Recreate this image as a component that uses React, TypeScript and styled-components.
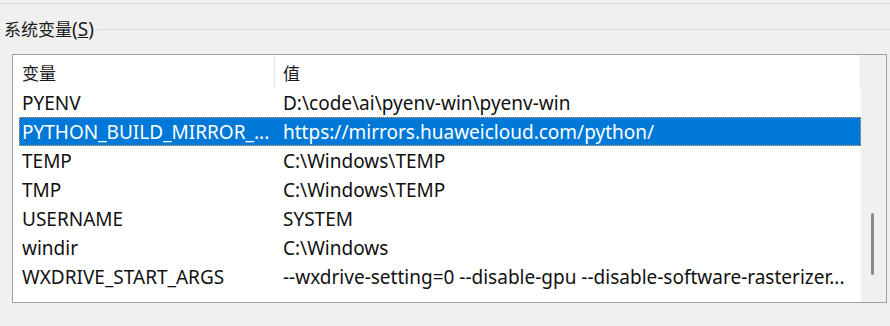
import React from "react";
import styled, { createGlobalStyle } from "styled-components";

const GlobalStyle = createGlobalStyle`
  html, body {
    margin: 0;
    padding: 0;
    background: #f0f0f0;
  }
  body {
    font-family: "Noto Sans", "Noto Sans CJK SC", sans-serif;
    font-size: 19px;
    color: #000;
  }
`;

const Page = styled.div`
  width: 890px;
  height: 326px;
  padding-top: 3px;
  box-sizing: border-box;
  overflow: hidden;
`;

const TopRule = styled.div`
  height: 1px;
  background: #dadada;
`;

const GroupHeader = styled.div`
  display: flex;
  align-items: center;
  height: 26px;
  margin-top: 12px;
`;

const Rule = styled.div<{ $grow?: boolean }>`
  height: 1px;
  background: #dadada;
  width: ${(p) => (p.$grow ? "auto" : "3px")};
  flex: ${(p) => (p.$grow ? 1 : "none")};
`;

const Legend = styled.span`
  padding: 0 3px 0 1px;
  color: #1a1a1a;
  line-height: 26px;
`;

const Cjk = styled.span`
  font-family: "Noto Sans CJK SC", sans-serif;
  font-size: 17px;
`;

const ListBox = styled.div`
  margin: 12px 0 0 12px;
  width: 875px;
  height: 249px;
  box-sizing: border-box;
  border: 1px solid #a0a0a0;
  background: #fff;
  display: flex;
`;

const Content = styled.div`
  flex: 1;
  display: flex;
  flex-direction: column;
  min-width: 0;
`;

const HeaderRow = styled.div`
  display: flex;
  height: 33px;
  flex: none;
`;

const HeaderCell = styled.div<{ $width?: number }>`
  box-sizing: border-box;
  width: ${(p) => (p.$width ? `${p.$width}px` : "auto")};
  flex: ${(p) => (p.$width ? "none" : 1)};
  padding-left: ${(p) => (p.$width ? 9 : 8)}px;
  display: flex;
  align-items: center;
  margin-top: 1px;
  border-right: 1px solid #e5e5e5;
  color: #1a1a1a;
`;

const Row = styled.div<{ $selected?: boolean }>`
  display: flex;
  align-items: center;
  height: 29px;
  margin-left: 6px;
  box-sizing: border-box;
  background: ${(p) => (p.$selected ? "#0078d7" : "transparent")};
  color: ${(p) => (p.$selected ? "#fff" : "#111")};
  outline: ${(p) => (p.$selected ? "1px dotted #e0a060" : "none")};
  outline-offset: -1px;
  white-space: nowrap;
`;

const NameCell = styled.div`
  width: 261px;
  flex: none;
  padding-left: 3px;
  box-sizing: border-box;
  overflow: hidden;
`;

const ValueCell = styled.div`
  flex: 1;
  padding-left: 3px;
  overflow: hidden;
`;

const ScrollTrack = styled.div`
  width: 25px;
  flex: none;
  background: #f0f0f0;
  position: relative;
`;

const Thumb = styled.div`
  position: absolute;
  left: 10px;
  top: 158px;
  width: 3px;
  height: 62px;
  border-radius: 2px;
  background: #8a8a8a;
`;

const vars: [string, string][] = [
  ["PYENV", "D:\\code\\ai\\pyenv-win\\pyenv-win"],
  ["PYTHON_BUILD_MIRROR_...", "https://mirrors.huaweicloud.com/python/"],
  ["TEMP", "C:\\Windows\\TEMP"],
  ["TMP", "C:\\Windows\\TEMP"],
  ["USERNAME", "SYSTEM"],
  ["windir", "C:\\Windows"],
  [
    "WXDRIVE_START_ARGS",
    "--wxdrive-setting=0 --disable-gpu --disable-software-rasterizer...",
  ],
];

export default function App() {
  return (
    <>
      <GlobalStyle />
      <Page>
        <TopRule />
        <GroupHeader>
          <Rule />
          <Legend>
            <Cjk>系统变量</Cjk>(<u>S</u>)
          </Legend>
          <Rule $grow />
        </GroupHeader>
        <ListBox>
          <Content>
            <HeaderRow>
              <HeaderCell $width={262}>
                <Cjk>变量</Cjk>
              </HeaderCell>
              <HeaderCell>
                <Cjk>值</Cjk>
              </HeaderCell>
            </HeaderRow>
            {vars.map(([name, value], i) => (
              <Row key={name} $selected={i === 1}>
                <NameCell>{name}</NameCell>
                <ValueCell>{value}</ValueCell>
              </Row>
            ))}
          </Content>
          <ScrollTrack>
            <Thumb />
          </ScrollTrack>
        </ListBox>
      </Page>
    </>
  );
}
